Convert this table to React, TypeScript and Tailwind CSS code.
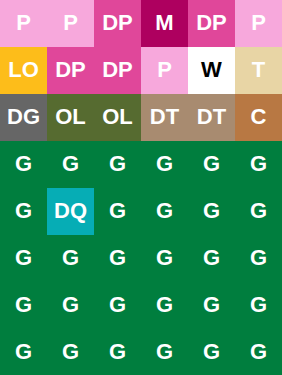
import React from "react";

type Cell = { t: string; bg: string; dark?: boolean };

const P = "bg-[#f7a8dc]";
const DP = "bg-[#e0479a]";
const M = "bg-[#ae005f]";
const LO = "bg-[#fdbd1a]";
const W = "bg-[#ffffff]";
const T = "bg-[#e8d5a5]";
const DG = "bg-[#666666]";
const OL = "bg-[#566b30]";
const DT = "bg-[#a88b70]";
const C = "bg-[#b87843]";
const G = "bg-[#007e3e]";
const DQ = "bg-[#06adb5]";

const rows: Cell[][] = [
  [
    { t: "P", bg: P },
    { t: "P", bg: P },
    { t: "DP", bg: DP },
    { t: "M", bg: M },
    { t: "DP", bg: DP },
    { t: "P", bg: P },
  ],
  [
    { t: "LO", bg: LO },
    { t: "DP", bg: DP },
    { t: "DP", bg: DP },
    { t: "P", bg: P },
    { t: "W", bg: W, dark: true },
    { t: "T", bg: T },
  ],
  [
    { t: "DG", bg: DG },
    { t: "OL", bg: OL },
    { t: "OL", bg: OL },
    { t: "DT", bg: DT },
    { t: "DT", bg: DT },
    { t: "C", bg: C },
  ],
  Array.from({ length: 6 }, () => ({ t: "G", bg: G })),
  [
    { t: "G", bg: G },
    { t: "DQ", bg: DQ },
    { t: "G", bg: G },
    { t: "G", bg: G },
    { t: "G", bg: G },
    { t: "G", bg: G },
  ],
  Array.from({ length: 6 }, () => ({ t: "G", bg: G })),
  Array.from({ length: 6 }, () => ({ t: "G", bg: G })),
  Array.from({ length: 6 }, () => ({ t: "G", bg: G })),
];

export default function App() {
  return (
    <div
      className="w-[282px] h-[375px] overflow-hidden bg-[#007e3e]"
      style={{ fontFamily: '"Liberation Sans", Arial, sans-serif' }}
    >
      <div className="grid grid-cols-[repeat(6,47px)] auto-rows-[47px]">
        {rows.flat().map((c, i) => (
          <div
            key={i}
            className={`${c.bg} flex items-center justify-center pb-[2px] text-[22px] font-bold ${
              c.dark ? "text-black" : "text-white"
            }`}
          >
            {c.t}
          </div>
        ))}
      </div>
    </div>
  );
}
